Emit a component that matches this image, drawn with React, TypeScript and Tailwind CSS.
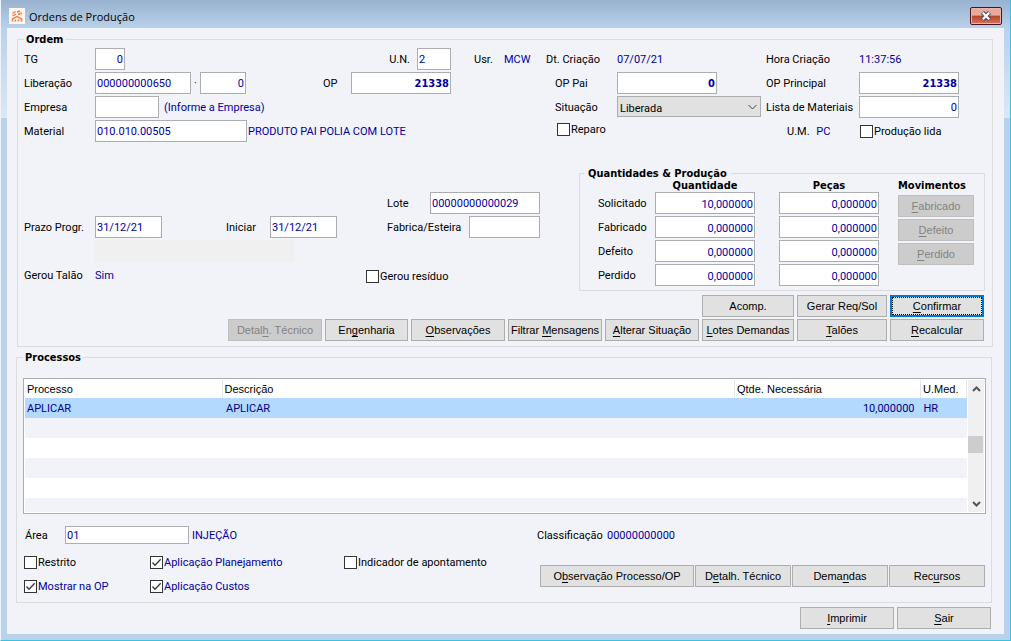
import React from 'react';
import clsx from 'clsx';

const LABEL_FONT = "font-['Roboto',sans-serif]";
const BOLD_FONT = "font-['DejaVu_Sans_Condensed','DejaVu_Sans',sans-serif] font-bold";
const BUTTON_FONT = "font-['Liberation_Sans',Arial,sans-serif]";

// "&" marks the access key, as in a Windows caption
const Caption = ({ text }: { text: string }) => {
  const at = text.indexOf('&');
  if (at < 0) return <>{text}</>;
  return (
    <>
      {text.slice(0, at)}
      <span className="underline underline-offset-2">{text[at + 1]}</span>
      {text.slice(at + 2)}
    </>
  );
};

interface BtnProps {
  text: string;
  className?: string;
  disabled?: boolean;
  primary?: boolean;
}

const Btn = ({ text, className, disabled, primary }: BtnProps) => (
  <button
    type="button"
    disabled={disabled}
    className={clsx(
      'h-[22px] shrink-0 whitespace-nowrap text-[11px] leading-4',
      BUTTON_FONT,
      disabled && 'border border-[#bfbfbf] bg-[#cccccc] text-[#838383]',
      !disabled && 'bg-[#e1e1e1] text-black',
      !disabled && !primary && 'border border-[#adadad]',
      primary && 'border-2 border-[#0078d7]',
      className
    )}
  >
    {primary ? (
      <span className="flex h-full items-center justify-center border border-dotted border-black">
        <span>
          <Caption text={text} />
        </span>
      </span>
    ) : (
      <Caption text={text} />
    )}
  </button>
);

interface FieldProps {
  label: string;
  value?: string;
  className?: string;
  right?: boolean;
  bold?: boolean;
}

const Field = ({ label, value = '', className, right, bold }: FieldProps) => (
  <input
    type="text"
    aria-label={label}
    defaultValue={value}
    className={clsx(
      'shrink-0 border border-[#abadb3] bg-white px-px pt-0.5 text-[11px] text-[#0000a0] outline-none',
      right && 'text-right',
      bold && BOLD_FONT,
      className
    )}
  />
);

const Check = ({ label, checked, blue }: { label: string; checked?: boolean; blue?: boolean }) => (
  <label className={clsx('flex items-center gap-px whitespace-nowrap', blue && 'text-[#0000a0]')}>
    <span className="grid">
      <input
        type="checkbox"
        defaultChecked={checked}
        className="peer col-start-1 row-start-1 size-[13px] appearance-none border border-[#333333] bg-white"
      />
      <svg
        viewBox="0 0 13 13"
        className="pointer-events-none invisible col-start-1 row-start-1 size-[13px] peer-checked:visible"
        fill="none"
        stroke="#333333"
        strokeWidth="1.3"
      >
        <path d="M2.5 6.5 5 9.2 10.7 3.3" />
      </svg>
    </span>
    <span className="pt-0.5">{label}</span>
  </label>
);

const Value = ({ children, className }: { children: React.ReactNode; className?: string }) => (
  <span className={clsx('whitespace-nowrap text-[#0000a0]', className)}>{children}</span>
);

const Row = ({ label, children }: { label?: string; children?: React.ReactNode }) => (
  <div className="flex h-6 items-start leading-6">
    <span className="w-[71px] shrink-0 whitespace-nowrap">{label}</span>
    {children}
  </div>
);

const Chevron = ({ down }: { down?: boolean }) => (
  <svg viewBox="0 0 9 6" className="h-1.5 w-[9px]" fill="none" stroke="#555555" strokeWidth="2">
    <path d={down ? 'M1 1 4.5 4.5 8 1' : 'M1 5 4.5 1.5 8 5'} />
  </svg>
);

const quantities = [
  ['Solicitado', '10,000000', '0,000000'],
  ['Fabricado', '0,000000', '0,000000'],
  ['Defeito', '0,000000', '0,000000'],
  ['Perdido', '0,000000', '0,000000'],
];

const TitleBar = () => (
  <header className="flex h-7 items-start bg-linear-to-b from-[#98b2cf] to-[#b9d1ea] px-2">
    <div className="mt-2 flex size-4 items-center justify-center bg-[#fdf6f1]">
      <svg viewBox="0 0 12 12" className="size-3" fill="none" stroke="#f0783c" strokeWidth="1.4">
        <path d="M1.5 3.5 4.5 1.5M6 2l3-1M10 2.5v2M1.5 6 5 4M7 4.5 9 3.5M1.5 11.5V9L6 6.5l4.5 2.5v2.5M4.5 11.5V9.5M7.5 11.5V9.5" />
      </svg>
    </div>
    <h1 className="ml-1 flex-1 pt-[9px] font-['Open_Sans',sans-serif] text-[11px] leading-4 text-black">
      Ordens de Produção
    </h1>
    <button
      type="button"
      aria-label="Fechar"
      className="mt-[7px] flex h-[18px] w-8 items-center justify-center rounded-[2px] border border-[#4a1420] bg-linear-to-b from-[#e9a99b] from-45% via-[#b8422c] via-50% to-[#d4755f] inset-ring inset-ring-[#e9b5aa]"
    >
      <svg viewBox="0 0 12 10" className="h-2.5 w-3" fill="none">
        <path d="M2.5 1.5 9.5 8.5M9.5 1.5 2.5 8.5" stroke="#4b5060" strokeWidth="4.4" />
        <path d="M2.8 1.8 9.2 8.2M9.2 1.8 2.8 8.2" stroke="#ffffff" strokeWidth="2.2" />
      </svg>
    </button>
  </header>
);

const FrameSide = () => (
  <div className="w-1.5 shrink-0 bg-[#b9d1ea]">
    <div className="h-[90px] bg-linear-to-b from-[#b9d1ea] to-[#dbe8f6]" />
  </div>
);

const Quantities = () => (
  <fieldset className="w-[406px] shrink-0 border border-[#dcdcdc] pb-0.5 pl-[18px]">
    <legend className={clsx('-ml-3.5 h-[14px] px-1 leading-4', BOLD_FONT)}>Quantidades &amp; Produção</legend>
    <div className="flex">
      <div className="w-[57px] pt-3">
        {quantities.map(([name]) => (
          <div key={name} className="h-6 leading-6">
            {name}
          </div>
        ))}
      </div>
      {['Quantidade', 'Peças'].map((title, col) => (
        <div key={title} className={clsx('flex w-[100px] flex-col gap-0.5', col === 0 && 'mr-6')}>
          <div className={clsx('-mb-0.5 h-3 text-center leading-3', BOLD_FONT)}>{title}</div>
          {quantities.map((q) => (
            <Field key={q[0]} label={`${title} ${q[0]}`} value={q[col + 1]} right className="h-[22px] w-full" />
          ))}
        </div>
      ))}
      <div className="ml-[19px] flex w-[76px] flex-col gap-0.5">
        <div className={clsx('mb-px h-3 leading-3', BOLD_FONT)}>Movimentos</div>
        <Btn text="&Fabricado" disabled />
        <Btn text="&Defeito" disabled />
        <Btn text="&Perdido" disabled />
      </div>
    </div>
  </fieldset>
);

const Ordem = () => (
  <fieldset className="mr-[11px] ml-2.5 border border-[#dcdcdc] pr-[7px] pb-[5px] pl-1.5">
    <legend className={clsx('h-[14px] px-0.5 leading-4', BOLD_FONT)}>Ordem</legend>

    <div className="flex pt-0.5">
      <div className="min-w-0 flex-1">
        <Row label="TG">
          <Field label="TG" value="0" right className="h-[22px] w-[30px]" />
          <span className="w-[292px] pr-[7px] text-right">U.N.</span>
          <Field label="U.N." value="2" className="h-[22px] w-[34px]" />
          <span className="ml-[23px] w-[30px]">Usr.</span>
          <Value>MCW</Value>
        </Row>
        <Row label="Liberação">
          <Field label="Liberação" value="000000000650" className="h-[22px] w-24" />
          <Value className="w-[9px] text-center">·</Value>
          <Field label="Sequência" value="0" right className="h-[22px] w-[46px]" />
          <span className="ml-[77px] w-7">OP</span>
          <Field label="OP" value="21338" right bold className="h-[22px] w-[100px]" />
        </Row>
        <Row label="Empresa">
          <Field label="Empresa" className="mr-[5px] h-[22px] w-16" />
          <Value>(Informe a Empresa)</Value>
        </Row>
        <Row label="Material">
          <Field label="Material" value="010.010.00505" className="mr-px h-[22px] w-[152px]" />
          <Value>PRODUTO PAI POLIA COM LOTE</Value>
        </Row>
      </div>

      <div className="grid w-[439px] shrink-0 auto-rows-[24px] grid-cols-[71px_149px_93px_1fr] items-start leading-6 whitespace-nowrap">
        <span>Dt. Criação</span>
        <Value>07/07/21</Value>
        <span>Hora Criação</span>
        <Value>11:37:56</Value>

        <span className="pl-[9px]">OP Pai</span>
        <Field label="OP Pai" value="0" right bold className="h-[22px] w-[100px]" />
        <span>OP Principal</span>
        <Field label="OP Principal" value="21338" right bold className="h-[22px] w-[100px]" />

        <label htmlFor="situacao" className="pl-[9px]">
          Situação
        </label>
        <div className="relative w-36">
          <select
            id="situacao"
            className="block h-[21px] w-full appearance-none border border-[#adadad] bg-[#e1e1e1] px-0.5 text-[11px] text-black"
          >
            <option>Liberada</option>
          </select>
          <svg
            viewBox="0 0 9 6"
            className="pointer-events-none absolute top-2 right-1 h-1.5 w-[9px]"
            fill="none"
            stroke="#444444"
          >
            <path d="M.5 1 4.5 5 8.5 1" />
          </svg>
        </div>
        <span>Lista de Materiais</span>
        <Field label="Lista de Materiais" value="0" right className="h-[22px] w-[100px]" />

        <div className="col-span-2 pl-[11px] leading-4">
          <Check label="Reparo" />
        </div>
        <span className="pl-[21px]">
          U.M. <Value className="ml-1">PC</Value>
        </span>
        <div className="pl-px leading-5">
          <Check label="Produção lida" />
        </div>
      </div>
    </div>

    <div className="mt-[22px] flex">
      <div className="min-w-0 flex-1 pt-[26px]">
        <Row>
          <span className="ml-[292px] w-[43px]">Lote</span>
          <Field label="Lote" value="00000000000029" className="h-[22px] w-[110px]" />
        </Row>
        <Row label="Prazo Progr.">
          <Field label="Prazo Progr." value="31/12/21" className="h-[22px] w-[67px]" />
          <span className="ml-16 w-11">Iniciar</span>
          <Field label="Iniciar" value="31/12/21" className="h-[22px] w-[67px]" />
          <span className="ml-[50px] w-[82px] whitespace-nowrap">Fabrica/Esteira</span>
          <Field label="Fabrica/Esteira" className="h-[22px] w-[71px]" />
        </Row>
        <Row>
          <div className="h-[22px] w-[200px] bg-[#f0f0f0]" />
        </Row>
        <Row label="Gerou Talão">
          <Value className="w-[271px]">Sim</Value>
          <div className="leading-[22px]">
            <Check label="Gerou resíduo" />
          </div>
        </Row>
      </div>
      <Quantities />
    </div>

    <div className="mt-1 mr-px flex justify-end gap-[3px]">
      <Btn text="Acomp." className="w-[92px]" />
      <Btn text="Gerar Req/Sol" className="w-[90px]" />
      <Btn text="&Confirmar" className="w-[94px]" primary />
    </div>
    <div className="mt-0.5 mr-px flex justify-end gap-[3px]">
      <Btn text="Detal&h. Técnico" className="w-[94px]" disabled />
      <Btn text="En&genharia" className="w-[83px]" />
      <Btn text="&Observações" className="w-[94px]" />
      <Btn text="Filtrar &Mensagens" className="w-[94px]" />
      <Btn text="&Alterar Situação" className="w-[94px]" />
      <Btn text="&Lotes Demandas" className="w-[92px]" />
      <Btn text="&Talões" className="w-[90px]" />
      <Btn text="&Recalcular" className="w-[94px]" />
    </div>
  </fieldset>
);

const ProcessTable = () => (
  <div className="mt-3.5 flex h-[136px] border border-[#abadb3] bg-white p-px">
    <div className="min-w-0 flex-1 overflow-hidden">
      <table className="w-full table-fixed border-collapse text-left">
        <colgroup>
          <col className="w-[197px]" />
          <col />
          <col className="w-[186px]" />
          <col className="w-[46px]" />
        </colgroup>
        <thead>
          <tr className={clsx('h-[18px] text-[11px] leading-[17px]', BUTTON_FONT)}>
            {['Processo', 'Descrição', 'Qtde. Necessária', 'U.Med.'].map((title) => (
              <th key={title} className="border-r border-[#e5e5e5] px-0.5 py-0 font-normal whitespace-nowrap">
                {title}
              </th>
            ))}
          </tr>
        </thead>
        <tbody>
          <tr className="h-5 bg-[#b3d9ff] leading-[18px] text-[#00008b]">
            <td className="px-0.5 pt-0.5 pb-0">APLICAR</td>
            <td className="px-1 pt-0.5 pb-0">APLICAR</td>
            <td className="px-1.5 pt-0.5 pb-0 text-right">10,000000</td>
            <td className="px-[3px] pt-0.5 pb-0">HR</td>
          </tr>
          {[0, 1, 2, 3, 4].map((n) => (
            <tr key={n} className="h-5 odd:bg-white even:bg-[#f2f3f9]">
              <td colSpan={4} className="p-0" />
            </tr>
          ))}
        </tbody>
      </table>
    </div>
    <div className="ml-px flex w-4 flex-col items-center bg-[#f0f0f0]">
      <button type="button" aria-label="Rolar para cima" className="flex h-[17px] items-center">
        <Chevron />
      </button>
      <div className="flex w-full flex-1 flex-col pt-[39px]">
        <div className="h-[17px] w-[15px] bg-[#cdcdcd]" />
      </div>
      <button type="button" aria-label="Rolar para baixo" className="flex h-[17px] items-center">
        <Chevron down />
      </button>
    </div>
  </div>
);

const Processos = () => (
  <fieldset className="mt-[3px] mr-3 ml-[9px] border border-[#dcdcdc] pr-[5px] pb-1 pl-1.5">
    <legend className={clsx('h-[14px] px-0.5 leading-4', BOLD_FONT)}>Processos</legend>
    <ProcessTable />

    <div className="mt-3 flex h-6 items-start pl-0.5 leading-5">
      <label htmlFor="area" className="w-10">
        Área
      </label>
      <input
        id="area"
        type="text"
        defaultValue="01"
        className="h-[18px] w-[124px] border border-[#abadb3] bg-white px-px pt-0.5 text-[11px] text-[#0000a0]"
      />
      <Value className="ml-[3px] w-[345px]">INJEÇÃO</Value>
      <span className="w-[70px]">Classificação</span>
      <Value>00000000000</Value>
    </div>

    <div className="flex items-start justify-between">
      <div className="grid auto-rows-[24px] grid-cols-[126px_194px_auto] items-center pl-px">
        <Check label="Restrito" />
        <Check label="Aplicação Planejamento" checked blue />
        <Check label="Indicador de apontamento" />
        <Check label="Mostrar na OP" checked blue />
        <Check label="Aplicação Custos" checked blue />
      </div>
      <div className="mt-[15px] mr-px flex gap-px">
        <Btn text="O&bservação Processo/OP" className="w-[154px]" />
        <Btn text="D&etalh. Técnico" className="w-24" />
        <Btn text="Dema&ndas" className="w-24" />
        <Btn text="Rec&ursos" className="w-24" />
      </div>
    </div>
  </fieldset>
);

export default function App() {
  return (
    <div className="flex min-h-screen flex-col border-r border-b border-l border-r-[#35c5e0] border-b-[#35c5e0] border-l-[#eef4fa] bg-[#b9d1ea]">
      <TitleBar />
      <div className="flex flex-1">
        <FrameSide />
        <main className={clsx('min-w-0 flex-1 bg-[#f2f3f9] pt-1 pb-[5px] text-[11px] text-black', LABEL_FONT)}>
          <Ordem />
          <Processos />
          <div className="mt-1 mr-[13px] flex justify-end gap-[3px]">
            <Btn text="&Imprimir" className="w-[94px]" />
            <Btn text="&Sair" className="w-[94px]" />
          </div>
        </main>
        <FrameSide />
      </div>
      <div className="h-1.5 bg-[#b9d1ea]" />
    </div>
  );
}
